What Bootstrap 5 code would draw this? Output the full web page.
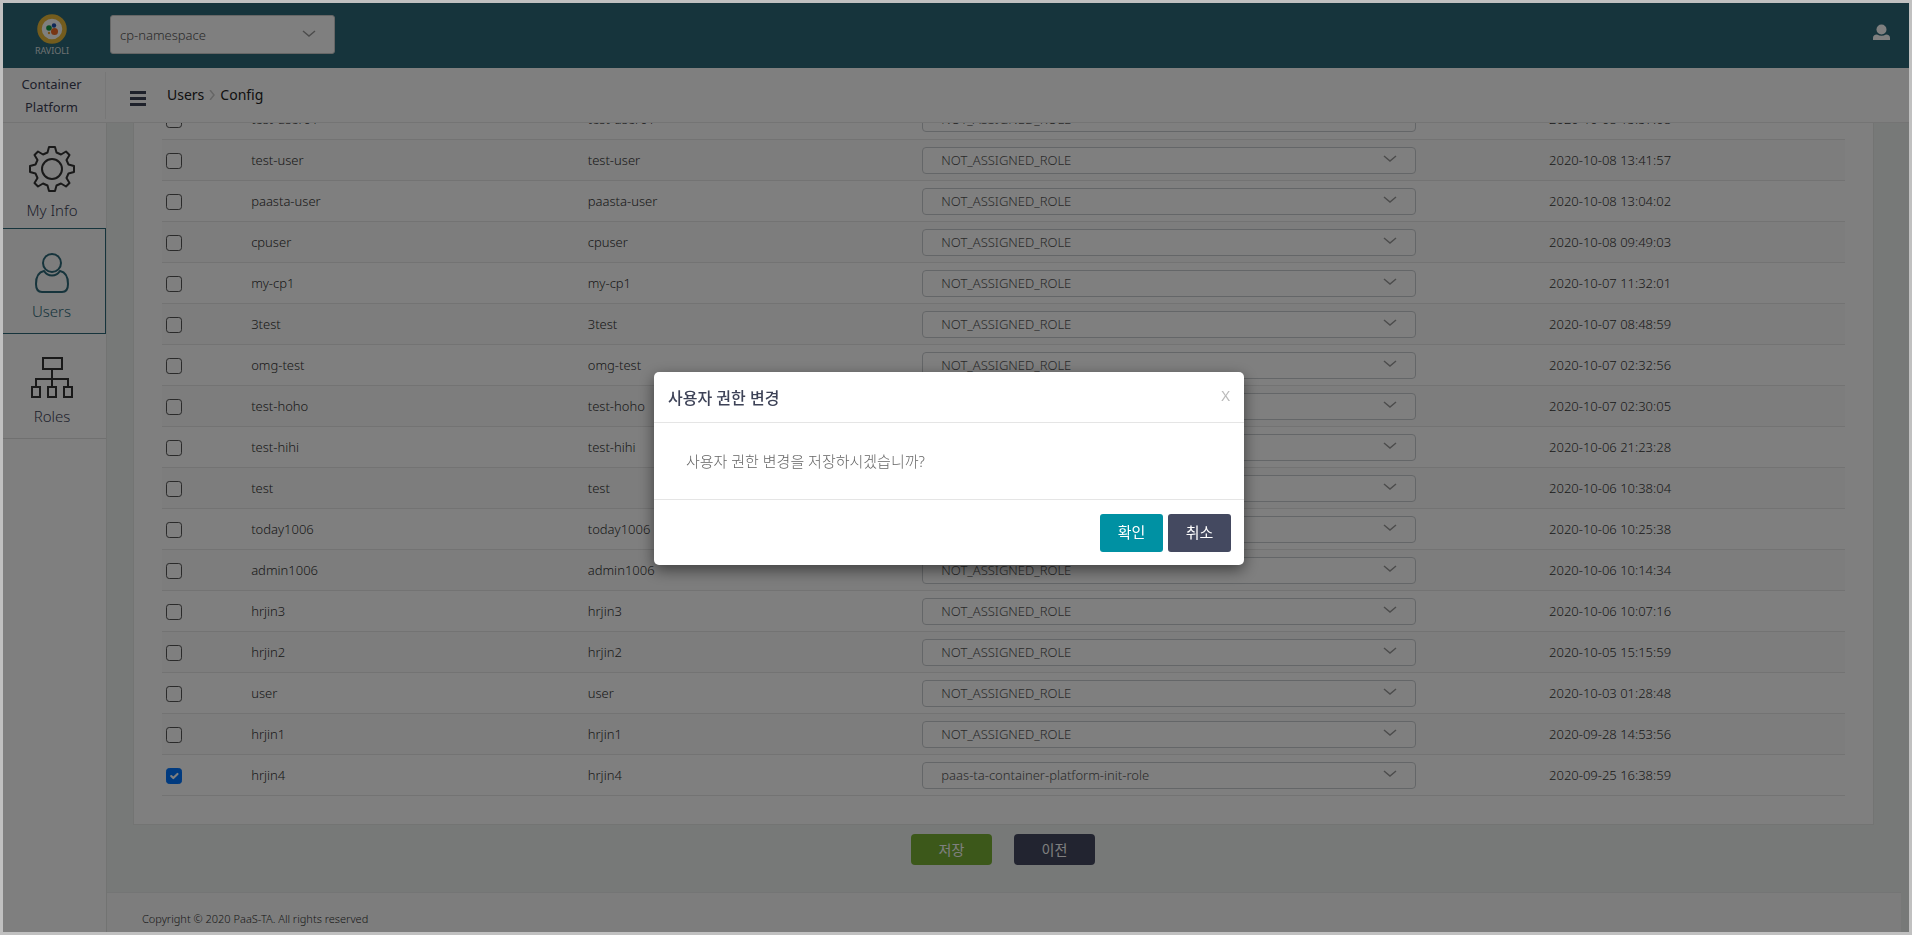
<!DOCTYPE html>
<html lang="ko">
<head>
<meta charset="utf-8">
<meta name="viewport" content="width=device-width, initial-scale=1">
<title>Container Platform - Users</title>
<link href="https://cdn.jsdelivr.net/npm/bootstrap@5.3.0/dist/css/bootstrap.min.css" rel="stylesheet">
<style>
  :root { --teal: #2c6878; --ink: #3d4257; }
  body { font-family: "Noto Sans", "Noto Sans CJK KR", sans-serif; font-size: 13px; font-weight: 300; line-height: 20px; color: #333; }
  a { text-decoration: none; color: inherit; }
  .app-frame { height: 100vh; border: 3px solid #c0c0c0; }
  .topbar { height: 65px; background: var(--teal); padding: 0 19px 2px 0; }
  .brand { width: 97px; }
  .brand svg { display: block; margin: 0 auto; }
  .ns-select { width: 225px; height: 39px; margin-left: 10px; border: 1px solid #ccc; border-radius: 3px; font-size: 13px; font-weight: 300; padding: 2px 50px 0 9px; color: #555; background-size: 14px 14px; background-position: right 18px center; }
  .chev { background-image: url("data:image/svg+xml,%3Csvg xmlns='http://www.w3.org/2000/svg' viewBox='0 0 14 14'%3E%3Cpath d='M1 3l6 5 6-5' fill='none' stroke='%23999' stroke-width='1.500'/%3E%3C/svg%3E"); background-repeat: no-repeat; }
  .crumbbar { height: 55px; border-bottom: 1px solid #e8e8e8; background: #fff; }
  .side-title { width: 103px; height: 47px; padding: 1px 5px 0 0; border-right: 1px solid #eee; line-height: 23px; font-weight: 400; color: #3d4257; }
  .menu-btn { width: 17px; margin: 6px 20px 0 24px; color: #3d4257; }
  .crumbs { font-size: 14px; font-weight: 400; color: #222; gap: 5px; }
  .sidebar { width: 104px; background: #fff; border-right: 1px solid #e4e6e5; flex: none; }
  .side-item { height: 105px; padding: 0 5px 12px 0; border-bottom: 1px solid #e0e0e0; font-size: 15px; color: #3d4257; }
  .side-item:first-child { height: 106px; padding-bottom: 8px; }
  .side-item.current { border: 1px solid var(--teal); border-left: 0; margin-top: -1px; height: 106px; background: #fafafa; color: var(--teal); }
  .side-item svg { margin-bottom: 8px; }
  .main-pane { background: #eff3f1; }
  .sheet { margin: 0 35px 0 26px; background: #fff; border: 1px solid #e6e8e7; padding: 0 28px 28px; }
  .user-table { table-layout: fixed; margin: 0; }
  .user-table td { height: 41px; padding: 0 5px; vertical-align: middle; border-bottom: 1px solid #e6e6e6; }
  .user-table td:last-child { padding-left: 7px; }
  .user-table tbody tr:nth-child(even) td { background: #fafafa; }
  .user-table td.pick { padding: 2px 0 0 4px; }
  .user-table td.role { padding: 0 3px; }
  .tick { width: 16px; height: 16px; margin: 0; display: block; border: 1px solid #555; border-radius: 2px; }
  .tick:checked { background-color: #0075ff; border-color: #0075ff; }
  .role-select { width: 80%; height: 27px; border: 1px solid #c9cdd0; border-radius: 4px; font-size: 13px; font-weight: 300; padding: 2px 40px 0 18px; color: #555; background-color: #fff; background-size: 14px 14px; background-position: right 18px center; display: block; }
  .page-actions { height: 67px; padding: 9px 10px 0 0; gap: 22px; }
  .page-actions .btn { width: 81px; height: 31px; border: 0; border-radius: 4px; padding: 0; font-size: 14px; color: #fff; }
  .go { background: #78b035; }
  .back { background: #444960; }
  .foot { height: 40px; margin-right: 8px; border-top: 1px solid #e9eaea; background: #fbfbfb; padding: 14px 35px 0; font-size: 11px; line-height: 24px; }
  .confirm-box { max-width: 590px; margin: 372px auto 0; }
  .confirm-wrap { padding: 0 14px 0 0; }
  .confirm-box .modal-content { border: 0; border-radius: 5px; box-shadow: 0 5px 15px rgba(0,0,0,.5); height: 193px; }
  .confirm-box .modal-header { height: 51px; padding: 2px 14px 0; border-color: #e5e5e5; }
  .confirm-box .modal-title { font-size: 16px; font-weight: 500; color: #3d4257; }
  .close-x { border: 0; background: none; padding: 0 0 6px; font-size: 15px; color: #bbb; }
  .confirm-box .modal-body { padding: 0 32px; font-size: 15px; color: #666; }
  .confirm-box .modal-footer { height: 66px; padding: 0 13px; gap: 5px; border-color: #e5e5e5; }
  .confirm-box .modal-footer .btn { width: 63px; height: 38px; margin: 0; padding: 0; border: 0; border-radius: 3px; font-size: 15px; color: #fff; }
  .ok { background: #0091a3; }
  .shade { inset: 3px; background: rgba(0,0,0,.5); z-index: 1040; }
</style>
</head>
<body>
<div class="app-frame d-flex flex-column overflow-hidden">
  <header class="topbar d-flex align-items-center flex-shrink-0">
    <a href="#" class="brand" aria-label="Ravioli">
      <svg width="40" height="44" viewBox="0 0 40 44">
        <circle cx="20" cy="16" r="12.500" fill="#fff" stroke="#e8b93a" stroke-width="4.500"/>
        <circle cx="17" cy="15" r="2.800" fill="#109848"/><circle cx="22" cy="12.500" r="2.200" fill="#1d4fb0"/>
        <circle cx="22.500" cy="18.500" r="3.500" fill="#f06a28"/><circle cx="17" cy="20" r="1.200" fill="#f0a030"/>
        <text x="20" y="41" text-anchor="middle" font-size="9" font-weight="400" fill="#dde2e4">RAVIOLI</text>
      </svg>
    </a>
    <select class="ns-select form-select chev" aria-label="Namespace"><option>cp-namespace</option></select>
    <a href="#" class="ms-auto pb-1" aria-label="Account"><svg class="d-block" width="17" height="17" viewBox="0 0 17 17" fill="#fff"><circle cx="8.500" cy="5.500" r="5"/><path d="M0 16v-2q0-3.500 4-3.500 4.500 2.500 9 0 4 0 4 3.500v2z"/></svg></a>
  </header>
  <div class="crumbbar d-flex align-items-center flex-shrink-0">
    <div class="side-title text-center">Container<br>Platform</div>
    <button class="menu-btn btn p-0 border-0 d-flex" aria-label="Menu"><svg width="16" height="15" viewBox="0 0 16 15" fill="currentColor"><path d="M0 0h16v3H0zM0 6h16v3H0zM0 12h16v3H0z"/></svg></button>
    <nav class="crumbs d-flex align-items-center" aria-label="Breadcrumb"><a href="#">Users</a><svg width="6" height="10" viewBox="0 0 6 10"><path d="M1 0l4 5-4 5" fill="none" stroke="#ccc" stroke-width="1.500"/></svg><a href="#">Config</a></nav>
  </div>
  <div class="d-flex flex-grow-1 overflow-hidden">
    <nav class="sidebar" aria-label="Sections">
      <a href="#" class="side-item d-flex flex-column align-items-center justify-content-end">
        <svg width="46" height="46" viewBox="0 0 46 46" fill="none" stroke="#333" stroke-width="2" stroke-linejoin="round"><circle cx="23" cy="23" r="10"/><path d="M20 1h6l1.500 5.500 4.500 2 5-3 3.500 3.500-3 5 2 4.500L45 20v6l-5.500 1.500-2 4.500 3 5-3.500 3.500-5-3-4.500 2L26 45h-6l-1.500-5.500-4.500-2-5 3L5.500 37l3-5-2-4.500L1 26v-6l5.500-1.500 2-4.500-3-5L9 5.500l5 3 4.500-2z"/></svg>
        My Info</a>
      <a href="#" class="side-item current d-flex flex-column align-items-center justify-content-end">
        <svg width="34" height="40" viewBox="0 0 34 40" fill="none" stroke="currentColor" stroke-width="2"><ellipse cx="17" cy="10" rx="9" ry="9"/><path d="M9 18c-5 1-8 5-8 13 0 6 2 8 6 8h20c4 0 6-2 6-8 0-8-3-12-8-13-4 6-12 6-16 0z"/></svg>
        Users</a>
      <a href="#" class="side-item d-flex flex-column align-items-center justify-content-end">
        <svg width="42" height="41" viewBox="0 0 42 41" fill="none" stroke="#333" stroke-width="2"><path d="M12 1h19v11H12zM1 30h8v10H1zM17 30h8v10h-8zM33 30h8v10h-8zM21 12v18M5 30v-8h32v8"/></svg>
        Roles</a>
    </nav>
    <main class="main-pane d-flex flex-column justify-content-end flex-grow-1 overflow-hidden">
      <section class="sheet">
        <table class="user-table w-100">
          <colgroup><col style="width:5%"><col style="width:20%"><col style="width:20%"><col style="width:37%"><col style="width:18%"></colgroup>
          <tbody id="user-rows"></tbody>
        </table>
      </section>
      <div class="page-actions d-flex justify-content-center align-items-start flex-shrink-0">
        <button class="btn go">저장</button><button class="btn back">이전</button>
      </div>
      <footer class="foot flex-shrink-0">Copyright © 2020 PaaS-TA. All rights reserved</footer>
    </main>
  </div>
</div>
<div class="shade position-fixed"></div>
<div class="modal d-block confirm-wrap" tabindex="-1" role="dialog" aria-labelledby="confirm-title">
  <div class="modal-dialog confirm-box">
    <div class="modal-content">
      <div class="modal-header"><h5 class="modal-title" id="confirm-title">사용자 권한 변경</h5><button class="close-x" aria-label="Close">X</button></div>
      <div class="modal-body d-flex align-items-center">사용자 권한 변경을 저장하시겠습니까?</div>
      <div class="modal-footer"><button class="btn ok">확인</button><button class="btn back">취소</button></div>
    </div>
  </div>
</div>
<script src="https://cdn.jsdelivr.net/npm/bootstrap@5.3.0/dist/js/bootstrap.bundle.min.js"></script>
<script>
  const users = [
    ["test-user01", "2020-10-08 15:57:08"], ["test-user", "2020-10-08 13:41:57"],
    ["paasta-user", "2020-10-08 13:04:02"], ["cpuser", "2020-10-08 09:49:03"],
    ["my-cp1", "2020-10-07 11:32:01"], ["3test", "2020-10-07 08:48:59"],
    ["omg-test", "2020-10-07 02:32:56"], ["test-hoho", "2020-10-07 02:30:05"],
    ["test-hihi", "2020-10-06 21:23:28"], ["test", "2020-10-06 10:38:04"],
    ["today1006", "2020-10-06 10:25:38"], ["admin1006", "2020-10-06 10:14:34"],
    ["hrjin3", "2020-10-06 10:07:16"], ["hrjin2", "2020-10-05 15:15:59"],
    ["user", "2020-10-03 01:28:48"], ["hrjin1", "2020-09-28 14:53:56"],
    ["hrjin4", "2020-09-25 16:38:59", "paas-ta-container-platform-init-role"]
  ];
  document.getElementById("user-rows").innerHTML = users.map(([name, date, role]) => `
    <tr>
      <td class="pick"><input type="checkbox" class="form-check-input tick" aria-label="${name}" ${role ? "checked" : ""}></td>
      <td>${name}</td><td>${name}</td>
      <td class="role"><select class="form-select role-select chev" aria-label="Role of ${name}"><option>${role || "NOT_ASSIGNED_ROLE"}</option></select></td>
      <td>${date}</td>
    </tr>`).join("");
</script>
</body>
</html>
